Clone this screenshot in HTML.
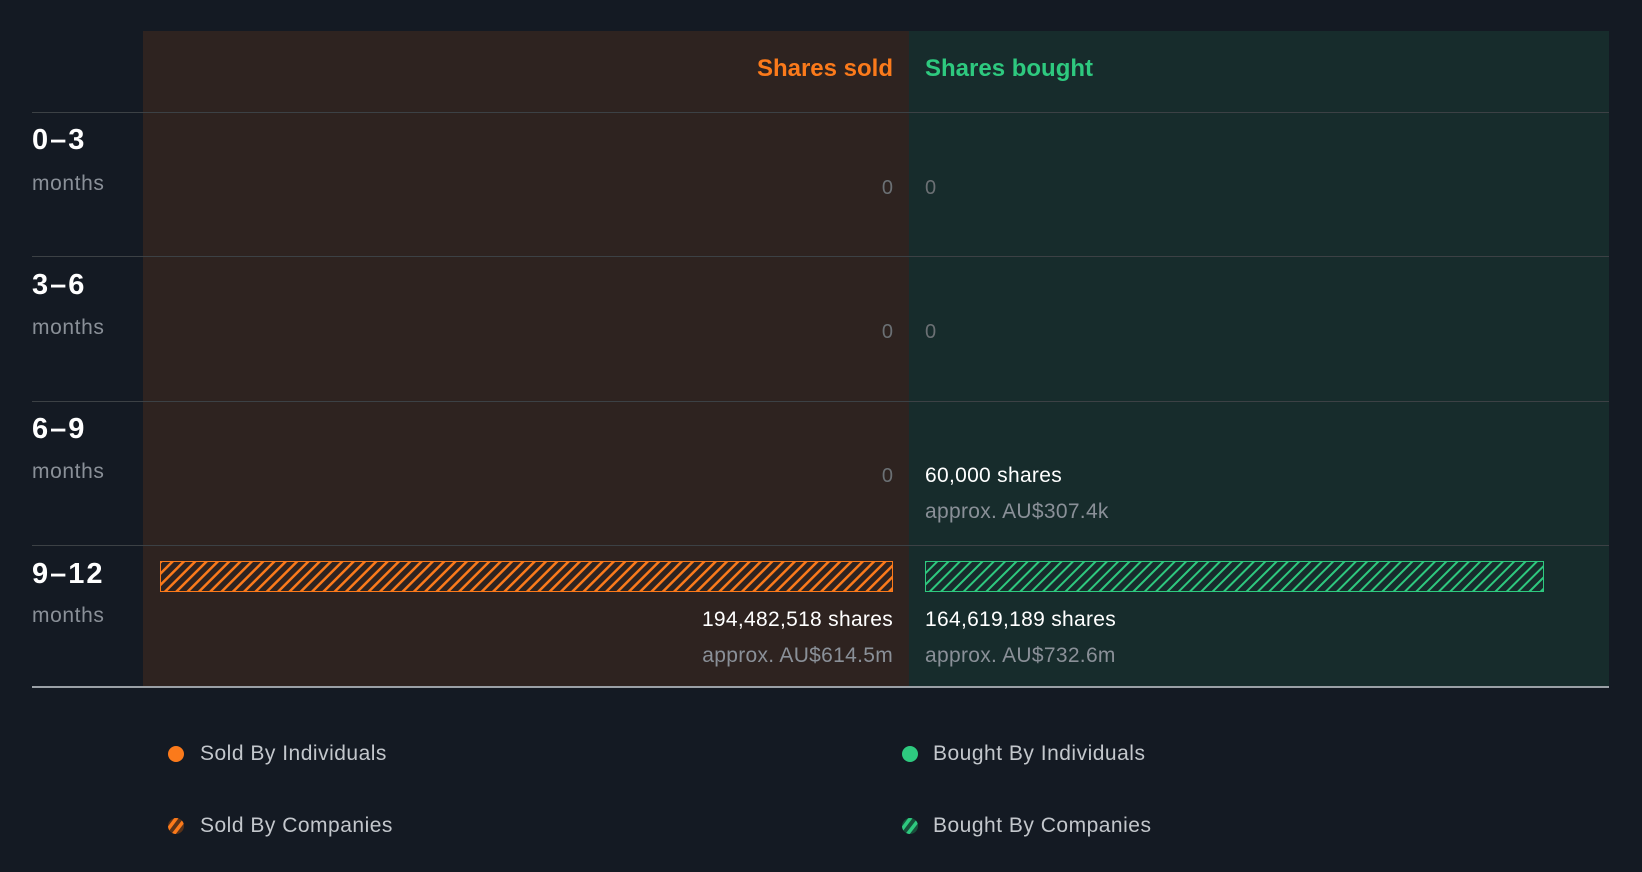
<!DOCTYPE html>
<html><head><meta charset="utf-8"><style>
*{margin:0;padding:0;box-sizing:border-box}
body{width:1642px;height:872px;background:#141a23;font-family:"Liberation Sans",sans-serif;position:relative;overflow:hidden}
.a{position:absolute;white-space:nowrap}
.sold{left:143px;width:766px;top:31px;height:656px;background:#2e2320}
.bought{left:909px;width:700px;top:31px;height:656px;background:#172c2c}
.ln{left:32px;width:1577px;height:1px;background:#3c4145}
.lbl{left:32px;font-size:29px;font-weight:bold;color:#fff;line-height:30px;letter-spacing:2px}
.mo{left:32px;font-size:21px;color:#8a9098;line-height:24px;letter-spacing:0.6px}
.z{font-size:20px;color:#6b7074;line-height:24px}
.r{right:749px;text-align:right}
.l{left:925px}
.w{font-size:21px;color:#fff;line-height:24px;letter-spacing:0.3px}
.g{font-size:21px;color:#8a9098;line-height:24px;letter-spacing:0.3px}
.lg{font-size:21px;color:#c3c7cc;line-height:24px;letter-spacing:0.5px}
.dot{width:16px;height:16px;border-radius:50%}
</style></head><body>
<div class="a sold"></div><div class="a bought"></div>
<div class="a" style="right:749px;top:55px;font-size:24px;font-weight:bold;color:#fb7a1b">Shares sold</div>
<div class="a" style="left:925px;top:55px;font-size:24px;font-weight:bold;color:#2ec97f">Shares bought</div>
<div class="a ln" style="top:112px"></div>
<div class="a ln" style="top:256px"></div>
<div class="a ln" style="top:401px"></div>
<div class="a ln" style="top:545px"></div>
<div class="a" style="left:32px;width:1577px;top:686px;height:2px;background:#9aa0a6"></div>

<div class="a lbl" style="top:125px">0–3</div><div class="a mo" style="top:172px">months</div>
<div class="a z r" style="top:176px">0</div><div class="a z l" style="top:176px">0</div>
<div class="a lbl" style="top:270px">3–6</div><div class="a mo" style="top:316px">months</div>
<div class="a z r" style="top:320px">0</div><div class="a z l" style="top:320px">0</div>
<div class="a lbl" style="top:414px">6–9</div><div class="a mo" style="top:460px">months</div>
<div class="a z r" style="top:464px">0</div>
<div class="a w l" style="top:464px">60,000 shares</div>
<div class="a g l" style="top:500px">approx. AU$307.4k</div>
<div class="a lbl" style="top:559px">9–12</div><div class="a mo" style="top:604px">months</div>
<svg class="a" style="left:160px;top:561px" width="733" height="31"><defs><pattern id="po" width="8" height="8" patternUnits="userSpaceOnUse" patternTransform="rotate(45)"><rect width="2.5" height="8" fill="#fb7a1b"/></pattern><pattern id="pg" width="8" height="8" patternUnits="userSpaceOnUse" patternTransform="rotate(45)"><rect width="2" height="8" fill="#2ec97f"/></pattern></defs><rect width="733" height="31" fill="url(#po)"/><rect x=".5" y=".5" width="732" height="30" fill="none" stroke="#fb7a1b" stroke-width="1"/></svg>
<svg class="a" style="left:925px;top:561px" width="619" height="31"><rect width="619" height="31" fill="url(#pg)"/><rect x=".5" y=".5" width="618" height="30" fill="none" stroke="#2ec97f" stroke-width="1"/></svg>
<div class="a w r" style="top:608px">194,482,518 shares</div>
<div class="a g r" style="top:644px">approx. AU$614.5m</div>
<div class="a w l" style="top:608px">164,619,189 shares</div>
<div class="a g l" style="top:644px">approx. AU$732.6m</div>

<div class="a dot" style="left:168px;top:746px;background:#fb7a1b"></div>
<div class="a lg" style="left:200px;top:742px">Sold By Individuals</div>
<div class="a dot" style="left:902px;top:746px;background:#2ec97f"></div>
<div class="a lg" style="left:933px;top:742px">Bought By Individuals</div>
<svg class="a" style="left:168px;top:818px" width="16" height="16"><defs><clipPath id="c"><circle cx="8" cy="8" r="8"/></clipPath></defs><g clip-path="url(#c)"><rect width="16" height="16" fill="#5a3218"/><path d="M-2 14L10-2M4 18L18 0" stroke="#fb7a1b" stroke-width="3.5"/></g></svg>
<div class="a lg" style="left:200px;top:814px">Sold By Companies</div>
<svg class="a" style="left:902px;top:818px" width="16" height="16"><g clip-path="url(#c)"><rect width="16" height="16" fill="#17503a"/><path d="M-2 14L10-2M4 18L18 0" stroke="#2ec97f" stroke-width="3.5"/></g></svg>
<div class="a lg" style="left:933px;top:814px">Bought By Companies</div>
</body></html>
